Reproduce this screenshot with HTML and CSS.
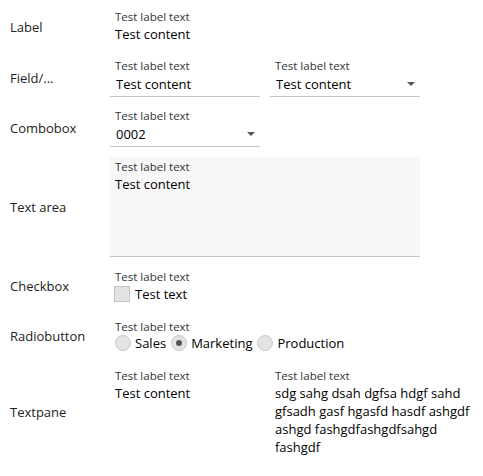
FILE: index.html
```html
<!DOCTYPE html>
<html>
<head>
<meta charset="utf-8">
<link rel="stylesheet" href="styles.css">
</head>
<body>
<div class="form">
  <div class="row row--label">
    <div class="row-title">Label</div>
    <div class="fields">
      <div class="field">
        <div class="sublabel">Test label text</div>
        <div class="static">Test content</div>
      </div>
    </div>
  </div>

  <div class="row row--field">
    <div class="row-title">Field/...</div>
    <div class="fields">
      <div class="field">
        <div class="sublabel">Test label text</div>
        <div class="input">Test content</div>
      </div>
      <div class="field">
        <div class="sublabel">Test label text</div>
        <div class="input"><span>Test content</span><span class="arrow"></span></div>
      </div>
    </div>
  </div>

  <div class="row row--combo">
    <div class="row-title">Combobox</div>
    <div class="fields">
      <div class="field">
        <div class="sublabel">Test label text</div>
        <div class="input"><span>0002</span><span class="arrow"></span></div>
      </div>
    </div>
  </div>

  <div class="row row--textarea">
    <div class="row-title">Text area</div>
    <div class="fields">
      <div class="textarea">
        <div class="sublabel">Test label text</div>
        <div class="static">Test content</div>
      </div>
    </div>
  </div>

  <div class="row row--check">
    <div class="row-title">Checkbox</div>
    <div class="fields">
      <div class="field field--check">
        <div class="sublabel">Test label text</div>
        <div class="choice">
          <span class="checkbox"></span><span>Test text</span>
        </div>
      </div>
    </div>
  </div>

  <div class="row row--radio">
    <div class="row-title">Radiobutton</div>
    <div class="fields">
      <div class="field field--radio">
        <div class="sublabel">Test label text</div>
        <div class="choice">
          <span class="radio"></span><span class="opt">Sales</span>
          <span class="radio radio--on"></span><span class="opt">Marketing</span>
          <span class="radio"></span><span class="opt">Production</span>
        </div>
      </div>
    </div>
  </div>

  <div class="row row--pane">
    <div class="row-title">Textpane</div>
    <div class="fields">
      <div class="field">
        <div class="sublabel">Test label text</div>
        <div class="static">Test content</div>
      </div>
      <div class="field field--pane">
        <div class="sublabel">Test label text</div>
        <div class="static">sdg sahg dsah dgfsa hdgf sahd gfsadh gasf hgasfd hasdf ashgdf ashgd fashgdfashgdfsahgd fashgdf</div>
      </div>
    </div>
  </div>
</div>
</body>
</html>
```

FILE: styles.css
```css
html, body {
  margin: 0;
  padding: 0;
  background: #ffffff;
}

body {
  font-family: "Open Sans", "Liberation Sans", sans-serif;
  font-size: 13px;
  color: #111;
}

.form {
  display: flex;
  flex-direction: column;
  padding-top: 9px;
}

.row {
  display: grid;
  grid-template-columns: 110px 1fr;
  align-items: center;
}

.row--label { margin-bottom: 13px; }
.row--field { margin-bottom: 11px; }
.row--combo { margin-bottom: 10px; }
.row--textarea { margin-bottom: 12px; }
.row--check { margin-bottom: 16px; }
.row--radio { margin-bottom: 16px; }

.row-title {
  padding-left: 10px;
  font-size: 13px;
  line-height: 18px;
  color: #222;
}

.fields {
  display: flex;
  gap: 10px;
  align-items: flex-start;
}

.field {
  width: 150px;
}

.field--pane {
  width: 201px;
}

.sublabel {
  font-size: 11.5px;
  line-height: 15px;
  color: #333;
  padding-left: 5px;
  white-space: nowrap;
}

.static {
  font-size: 13px;
  line-height: 18px;
  color: #000;
  padding: 1px 0 0 5px;
}

.row--label .static {
  padding-bottom: 2px;
}

.input {
  display: flex;
  align-items: center;
  justify-content: space-between;
  font-size: 13px;
  line-height: 18px;
  color: #000;
  padding: 2px 5px 3px 6px;
  border-bottom: 1px solid #c4c4c4;
}

.arrow {
  width: 0;
  height: 0;
  border-left: 4px solid transparent;
  border-right: 4px solid transparent;
  border-top: 4px solid #555;
}

.textarea {
  width: 310px;
  background: #f7f7f7;
  border-bottom: 1px solid #c4c4c4;
  padding-top: 2px;
  box-sizing: content-box;
  height: 97px;
}

.choice {
  display: flex;
  align-items: center;
  font-size: 13px;
  line-height: 18px;
  color: #000;
  white-space: nowrap;
}

.field--check .choice {
  padding-left: 4px;
  padding-top: 1px;
}

.checkbox {
  width: 14px;
  height: 14px;
  background: #e2e2e2;
  border: 1px solid #c4c4c4;
  margin-right: 5px;
  flex: none;
}

.field--radio .choice {
  padding-left: 5px;
}

.radio {
  width: 14px;
  height: 14px;
  border-radius: 50%;
  background: #e3e3e3;
  border: 1px solid #c9c9c9;
  margin-right: 4px;
  flex: none;
  display: flex;
  align-items: center;
  justify-content: center;
}

.radio--on::after {
  content: "";
  width: 6px;
  height: 6px;
  border-radius: 50%;
  background: #555;
}

.opt {
  margin-right: 5px;
}
```
